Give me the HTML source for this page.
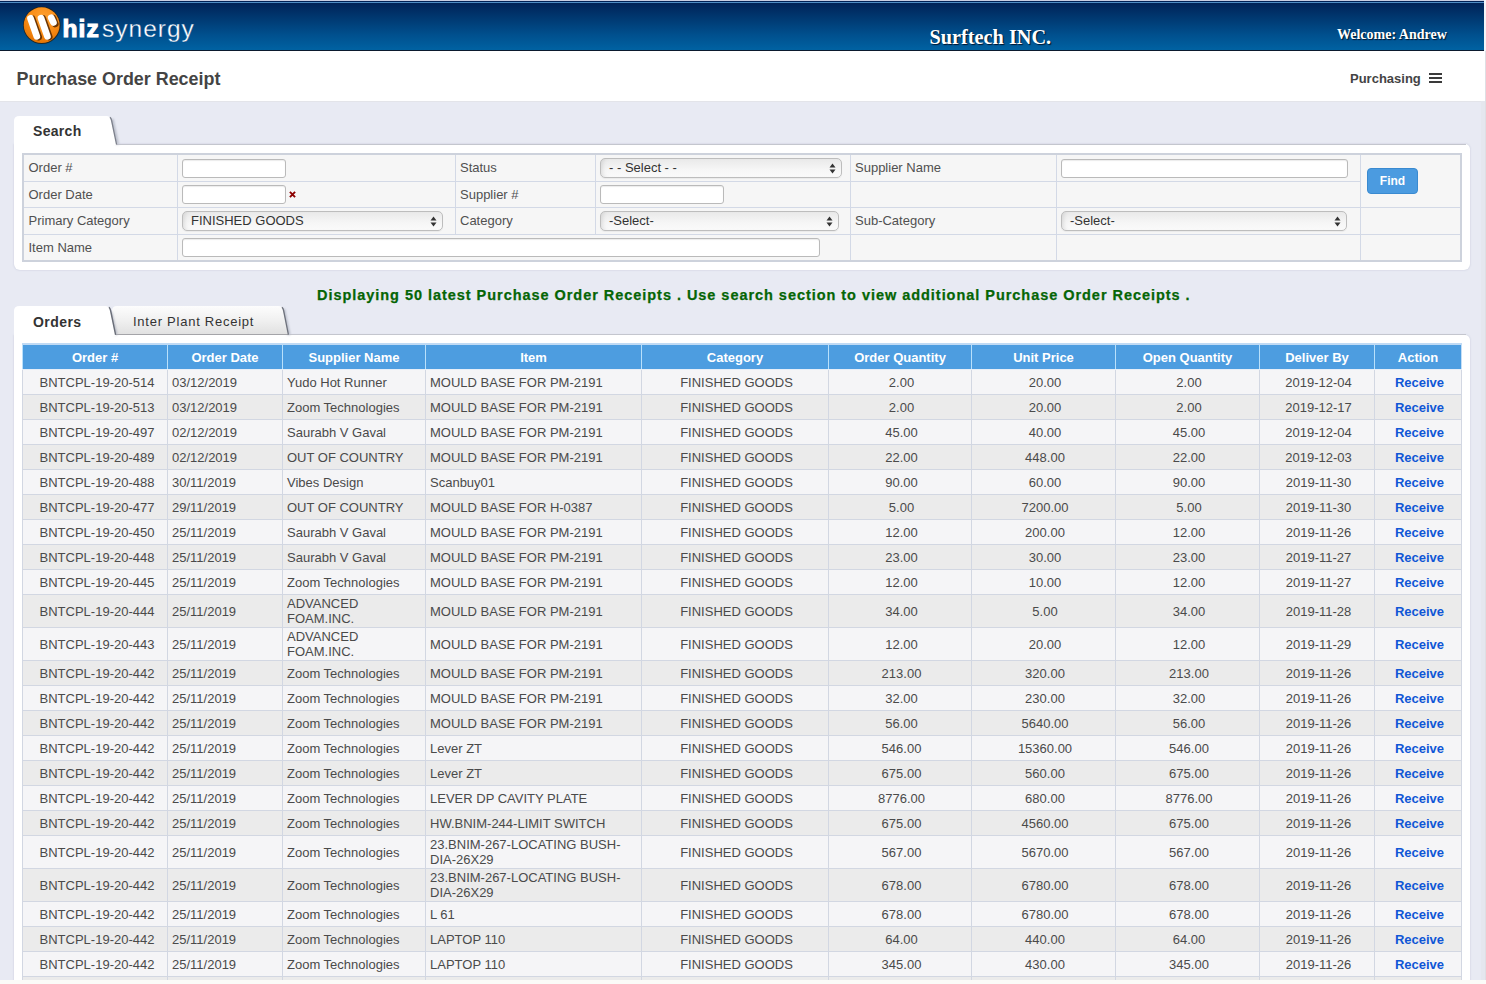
<!DOCTYPE html>
<html><head><meta charset="utf-8">
<style>
*{box-sizing:border-box;margin:0;padding:0}
html,body{width:1486px;height:984px;overflow:hidden}
body{background:#e8eaf3;font-family:"Liberation Sans",sans-serif;color:#4a4a4a;position:relative}
.abs{position:absolute}
#hdr{position:absolute;left:0;top:0;width:1484px;height:51px;background:linear-gradient(#001f55 0px,#00376f 16px,#00508e 34px,#0062a2 49px);border-top:1px solid #1b2740;border-bottom:1px solid #0b1a2e}
#hdrtop{position:absolute;left:0;top:0;width:1486px;height:1px;background:#c9cde2}
#hdrline{position:absolute;left:0;top:2px;width:1484px;height:1px;background:#4f8cc4}
#rstrip{position:absolute;left:1484px;top:0;width:2px;height:51px;background:#f4f4f8}
.sf{font-family:"Liberation Serif",serif;font-weight:bold;color:#fff;text-shadow:1px 1px 1px #00152e;white-space:nowrap}
#titlebar{position:absolute;left:0;top:51px;width:1486px;height:50px;background:#fff}
.panel{position:absolute;background:#fff;border-radius:6px;box-shadow:0 0 2px rgba(120,130,160,.35)}
.tabbar{position:absolute;left:0;top:0;right:0;background:#e8eaf3}
table.s{position:absolute;border-collapse:collapse;table-layout:fixed;background:#f6f6f6}
table.s td{border:1px solid #d3d9e6;font-size:13px;color:#505050;padding:0 0 0 4.5px;vertical-align:middle;white-space:nowrap}
.inp{position:absolute;background:#fff;border:1px solid #bababa;border-radius:3px;box-shadow:inset 0 1px 1px rgba(0,0,0,.08)}
.sel{position:absolute;background:linear-gradient(#e9e9e9,#f6f6f6 60%,#fafafa);border:1px solid #bdbdbd;border-radius:5px;font-size:13px;color:#333;line-height:17px;padding-left:8px;white-space:nowrap;box-shadow:inset 5px 0 5px -4px rgba(0,0,0,.13),0 1px 1px rgba(0,0,0,.05)}
.ar{position:absolute;right:5px;top:4px}
.lbl{position:absolute;font-size:13px;color:#4a4a4a;white-space:nowrap}
table.g{position:absolute;left:22px;top:343px;border-collapse:collapse;table-layout:fixed;width:1440px}
table.g th{background:#4d9de0;color:#fff;font-size:13px;font-weight:bold;height:25px;padding-top:1px !important;border-left:1px solid #b9e0fb;border-top:2px solid #c0daf4;border-bottom:1px solid #e6eef8;padding:0;text-align:center;white-space:nowrap}
table.g td{font-size:13px;color:#4a4a4a;height:25px;border:1px solid #d2d7e2;padding:1px 4px 0 4px;line-height:15px;white-space:nowrap;vertical-align:middle}
table.g th:last-child{border-right:1px solid #c4def6}
table.g td.c{text-align:center;padding-left:5.5px;padding-right:2.5px}
table.g td.c0{text-align:center;padding-left:9px;padding-right:5px}
table.g tr.o td{background:#f5f5f7}
table.g tr.e td{background:#ebebeb}
table.g tr.t td{height:33px}
table.g a{color:#0f56d6;font-weight:bold}
</style></head><body>
<div id="hdr"></div>
<div id="hdrtop"></div>
<div id="hdrline"></div>
<div id="rstrip"></div>
<svg class="abs" style="left:0;top:0" width="70" height="50" viewBox="0 0 70 50">
 <defs>
  <radialGradient id="og" cx="0.55" cy="0.3" r="0.75">
   <stop offset="0" stop-color="#ffa030"/><stop offset="0.6" stop-color="#f78a14"/><stop offset="1" stop-color="#e27000"/>
  </radialGradient>
 </defs>
 <circle cx="41.8" cy="25.4" r="18.7" fill="#2a1a05" opacity="0.75"/>
 <circle cx="41.7" cy="25.2" r="17.9" fill="url(#og)"/>
 <g stroke="#5e2c00" stroke-width="6.8" stroke-linecap="round" opacity="0.9">
  <line x1="32.2" y1="18.8" x2="38.6" y2="37"/>
  <line x1="42.8" y1="18.6" x2="49.2" y2="36.9"/>
  <line x1="53" y1="18.2" x2="55.2" y2="23.9"/>
 </g>
 <g stroke="#fff" stroke-width="6.7" stroke-linecap="round">
  <line x1="30.5" y1="18.3" x2="36.8" y2="36.4"/>
  <line x1="41" y1="18.1" x2="47.4" y2="36.4"/>
  <line x1="51.2" y1="17.8" x2="53.4" y2="22.4"/>
 </g>
</svg>
<div class="abs" style="left:62.5px;top:14px;font-size:24.5px;font-weight:bold;color:#fff;letter-spacing:1.1px;-webkit-text-stroke:1.1px #fff;line-height:30px">hiz</div>
<div class="abs" style="left:102px;top:14px;font-size:24.5px;color:#fff;letter-spacing:1px;line-height:30px;-webkit-text-stroke:0.3px #004586">synergy</div>
<div class="abs sf" style="left:929.5px;top:26px;font-size:20.3px;line-height:22px">Surftech INC.</div>
<div class="abs sf" style="left:1337px;top:27px;font-size:14px;line-height:16px">Welcome: Andrew</div>

<div id="titlebar"></div>
<div class="abs" style="left:0;top:101px;width:1486px;height:1px;background:#e3e4e9"></div>
<div class="abs" style="left:1481px;top:101px;width:5px;height:879px;background:#e5e7ee"></div>
<div class="abs" style="left:1485px;top:51px;width:1px;height:929px;background:#dedfe4"></div>
<div class="abs" style="left:16.5px;top:69px;font-size:17.9px;font-weight:bold;color:#444;line-height:20px">Purchase Order Receipt</div>
<div class="abs" style="left:1350px;top:71px;font-size:13px;font-weight:bold;color:#444;line-height:15px">Purchasing</div>
<div class="abs" style="left:1429px;top:73px;width:13px;height:2px;background:#3a3a3a"></div>
<div class="abs" style="left:1429px;top:77px;width:13px;height:2px;background:#3a3a3a"></div>
<div class="abs" style="left:1429px;top:81px;width:13px;height:2px;background:#3a3a3a"></div>

<!-- SEARCH PANEL -->
<div class="panel" style="left:14px;top:144px;width:1456px;height:126px;border-radius:0 5px 6px 6px"></div>
<div class="abs" style="left:112px;top:143.5px;width:1354px;height:1px;background:#c4c6ce"></div>
<svg class="abs" style="left:0;top:100px" width="140" height="50" viewBox="0 100 140 50">
 <defs><filter id="bl1" x="-50%" y="-10%" width="200%" height="120%"><feGaussianBlur stdDeviation="0.9"/></filter></defs>
 <path d="M112 119 L117.5 144.5" stroke="#b8bcc8" stroke-width="3" fill="none" filter="url(#bl1)"/>
 <path d="M14 145 L14 121 Q14 116 19.5 116 L106.5 116 Q110 116 111 119.5 L116.8 145 Z" fill="#fff"/>
 <path d="M110 117.2 Q111.2 118.5 111.6 120.5 L116.6 144.6" stroke="#7d818c" stroke-width="1.3" fill="none"/>
</svg>
<div class="abs" style="left:33px;top:123px;font-size:14px;font-weight:bold;color:#333;letter-spacing:0.3px;line-height:16px">Search</div>

<table class="s" style="left:22px;top:153px;width:1437px;height:107px;border:2px solid #cdd2dc">
<colgroup><col style="width:154px"><col style="width:278px"><col style="width:140px"><col style="width:255px"><col style="width:206px"><col style="width:304px"><col style="width:101px"></colgroup>
<tr style="height:27px"><td>Order #</td><td></td><td>Status</td><td></td><td>Supplier Name</td><td></td><td rowspan="2"></td></tr>
<tr style="height:26px"><td>Order Date</td><td></td><td>Supplier #</td><td></td><td></td><td></td></tr>
<tr style="height:27px"><td>Primary Category</td><td></td><td>Category</td><td></td><td>Sub-Category</td><td></td><td></td></tr>
<tr style="height:27px"><td>Item Name</td><td colspan="3"></td><td></td><td></td><td></td></tr>
</table>
<div class="inp" style="left:182px;top:159px;width:104px;height:19px"></div>
<div class="inp" style="left:182px;top:185px;width:104px;height:19px"></div>
<svg class="abs" style="left:289px;top:191px" width="7" height="7" viewBox="0 0 7 7"><path d="M0.9 0.9 L6.1 6.1 M6.1 0.9 L0.9 6.1" stroke="#8c0000" stroke-width="1.9"/></svg>
<div class="sel" style="left:182px;top:211px;width:261px;height:20px">FINISHED GOODS<svg class="ar" width="7" height="11" viewBox="0 0 7 11"><path d="M3.5 0.5 L6.5 4.5 L0.5 4.5 Z M0.5 6.5 L6.5 6.5 L3.5 10.5 Z" fill="#333"/></svg></div>
<div class="inp" style="left:182px;top:238px;width:638px;height:19px"></div>
<div class="sel" style="left:600px;top:158px;width:242px;height:20px">- - Select - -<svg class="ar" width="7" height="11" viewBox="0 0 7 11"><path d="M3.5 0.5 L6.5 4.5 L0.5 4.5 Z M0.5 6.5 L6.5 6.5 L3.5 10.5 Z" fill="#333"/></svg></div>
<div class="inp" style="left:600px;top:185px;width:124px;height:19px"></div>
<div class="sel" style="left:600px;top:211px;width:239px;height:20px">-Select-<svg class="ar" width="7" height="11" viewBox="0 0 7 11"><path d="M3.5 0.5 L6.5 4.5 L0.5 4.5 Z M0.5 6.5 L6.5 6.5 L3.5 10.5 Z" fill="#333"/></svg></div>
<div class="inp" style="left:1061px;top:159px;width:287px;height:19px"></div>
<div class="sel" style="left:1061px;top:211px;width:286px;height:20px">-Select-<svg class="ar" width="7" height="11" viewBox="0 0 7 11"><path d="M3.5 0.5 L6.5 4.5 L0.5 4.5 Z M0.5 6.5 L6.5 6.5 L3.5 10.5 Z" fill="#333"/></svg></div>
<div class="abs" style="left:1367px;top:168px;width:51px;height:26px;background:#4b9be0;border:1px solid #3a8ad0;border-radius:4px;color:#fff;font-size:12px;font-weight:bold;text-align:center;line-height:24px">Find</div>

<!-- ORDERS PANEL -->
<div class="panel" style="left:14px;top:335px;width:1456px;height:700px;border-radius:0 5px 6px 6px"></div>
<div class="abs" style="left:285px;top:334px;width:1181px;height:1px;background:#c4c6ce"></div>
<svg class="abs" style="left:0;top:295px" width="310" height="45" viewBox="0 295 310 45">
 <defs>
  <linearGradient id="tg" x1="0" y1="0" x2="0" y2="1"><stop offset="0" stop-color="#fdfdfd"/><stop offset="0.5" stop-color="#f0f0f0"/><stop offset="1" stop-color="#e0e0e0"/></linearGradient>
  <filter id="bl2" x="-50%" y="-10%" width="200%" height="120%"><feGaussianBlur stdDeviation="0.9"/></filter>
 </defs>
 <path d="M283.5 309 L289 335" stroke="#b8bcc8" stroke-width="3" fill="none" filter="url(#bl2)"/>
 <path d="M112 335 L112 311 Q112 306 117 306 L278.5 306 Q282 306 283 309.5 L288.6 335 Z" fill="url(#tg)"/>
 <path d="M112 334.5 L288.6 334.5" stroke="#a4a4a8" stroke-width="1"/>
 <path d="M282 307.2 Q283.2 308.5 283.6 310.5 L288.4 334.6" stroke="#6e727c" stroke-width="1.3" fill="none"/>
 <path d="M111 109" stroke="none"/>
 <path d="M110.5 312 L116 335" stroke="#b0b4c0" stroke-width="3" fill="none" filter="url(#bl2)"/>
 <path d="M14 336 L14 311 Q14 306 19.5 306 L105.5 306 Q109 306 110 309.5 L115.8 336 Z" fill="#fff"/>
 <path d="M109 307.2 Q110.2 308.5 110.6 310.5 L115.6 334.8" stroke="#6a6e78" stroke-width="1.4" fill="none"/>
</svg>
<div class="abs" style="left:33px;top:313.5px;font-size:14px;font-weight:bold;color:#333;letter-spacing:0.45px;line-height:16px">Orders</div>
<div class="abs" style="left:133px;top:314px;font-size:13px;color:#333;letter-spacing:0.75px;line-height:16px">Inter Plant Receipt</div>

<div class="abs" style="left:317px;top:287px;font-size:14.5px;font-weight:bold;color:#056505;letter-spacing:0.96px;line-height:16px;white-space:nowrap;-webkit-text-stroke:0.25px #056505">Displaying 50 latest Purchase Order Receipts . Use search section to view additional Purchase Order Receipts .</div>

<table class="g">
<colgroup><col style="width:145px"><col style="width:115px"><col style="width:143px"><col style="width:216px"><col style="width:187px"><col style="width:143px"><col style="width:144px"><col style="width:144px"><col style="width:115px"><col style="width:87px"></colgroup>
<tr><th>Order #</th><th>Order Date</th><th>Supplier Name</th><th>Item</th><th>Category</th><th>Order Quantity</th><th>Unit Price</th><th>Open Quantity</th><th>Deliver By</th><th>Action</th></tr>
<tr class="o"><td class="c0">BNTCPL-19-20-514</td><td>03/12/2019</td><td>Yudo Hot Runner</td><td>MOULD BASE FOR PM-2191</td><td class="c">FINISHED GOODS</td><td class="c">2.00</td><td class="c">20.00</td><td class="c">2.00</td><td class="c">2019-12-04</td><td class="c"><a>Receive</a></td></tr>
<tr class="e"><td class="c0">BNTCPL-19-20-513</td><td>03/12/2019</td><td>Zoom Technologies</td><td>MOULD BASE FOR PM-2191</td><td class="c">FINISHED GOODS</td><td class="c">2.00</td><td class="c">20.00</td><td class="c">2.00</td><td class="c">2019-12-17</td><td class="c"><a>Receive</a></td></tr>
<tr class="o"><td class="c0">BNTCPL-19-20-497</td><td>02/12/2019</td><td>Saurabh V Gaval</td><td>MOULD BASE FOR PM-2191</td><td class="c">FINISHED GOODS</td><td class="c">45.00</td><td class="c">40.00</td><td class="c">45.00</td><td class="c">2019-12-04</td><td class="c"><a>Receive</a></td></tr>
<tr class="e"><td class="c0">BNTCPL-19-20-489</td><td>02/12/2019</td><td>OUT OF COUNTRY</td><td>MOULD BASE FOR PM-2191</td><td class="c">FINISHED GOODS</td><td class="c">22.00</td><td class="c">448.00</td><td class="c">22.00</td><td class="c">2019-12-03</td><td class="c"><a>Receive</a></td></tr>
<tr class="o"><td class="c0">BNTCPL-19-20-488</td><td>30/11/2019</td><td>Vibes Design</td><td>Scanbuy01</td><td class="c">FINISHED GOODS</td><td class="c">90.00</td><td class="c">60.00</td><td class="c">90.00</td><td class="c">2019-11-30</td><td class="c"><a>Receive</a></td></tr>
<tr class="e"><td class="c0">BNTCPL-19-20-477</td><td>29/11/2019</td><td>OUT OF COUNTRY</td><td>MOULD BASE FOR H-0387</td><td class="c">FINISHED GOODS</td><td class="c">5.00</td><td class="c">7200.00</td><td class="c">5.00</td><td class="c">2019-11-30</td><td class="c"><a>Receive</a></td></tr>
<tr class="o"><td class="c0">BNTCPL-19-20-450</td><td>25/11/2019</td><td>Saurabh V Gaval</td><td>MOULD BASE FOR PM-2191</td><td class="c">FINISHED GOODS</td><td class="c">12.00</td><td class="c">200.00</td><td class="c">12.00</td><td class="c">2019-11-26</td><td class="c"><a>Receive</a></td></tr>
<tr class="e"><td class="c0">BNTCPL-19-20-448</td><td>25/11/2019</td><td>Saurabh V Gaval</td><td>MOULD BASE FOR PM-2191</td><td class="c">FINISHED GOODS</td><td class="c">23.00</td><td class="c">30.00</td><td class="c">23.00</td><td class="c">2019-11-27</td><td class="c"><a>Receive</a></td></tr>
<tr class="o"><td class="c0">BNTCPL-19-20-445</td><td>25/11/2019</td><td>Zoom Technologies</td><td>MOULD BASE FOR PM-2191</td><td class="c">FINISHED GOODS</td><td class="c">12.00</td><td class="c">10.00</td><td class="c">12.00</td><td class="c">2019-11-27</td><td class="c"><a>Receive</a></td></tr>
<tr class="e t"><td class="c0">BNTCPL-19-20-444</td><td>25/11/2019</td><td>ADVANCED<br>FOAM.INC.</td><td>MOULD BASE FOR PM-2191</td><td class="c">FINISHED GOODS</td><td class="c">34.00</td><td class="c">5.00</td><td class="c">34.00</td><td class="c">2019-11-28</td><td class="c"><a>Receive</a></td></tr>
<tr class="o t"><td class="c0">BNTCPL-19-20-443</td><td>25/11/2019</td><td>ADVANCED<br>FOAM.INC.</td><td>MOULD BASE FOR PM-2191</td><td class="c">FINISHED GOODS</td><td class="c">12.00</td><td class="c">20.00</td><td class="c">12.00</td><td class="c">2019-11-29</td><td class="c"><a>Receive</a></td></tr>
<tr class="e"><td class="c0">BNTCPL-19-20-442</td><td>25/11/2019</td><td>Zoom Technologies</td><td>MOULD BASE FOR PM-2191</td><td class="c">FINISHED GOODS</td><td class="c">213.00</td><td class="c">320.00</td><td class="c">213.00</td><td class="c">2019-11-26</td><td class="c"><a>Receive</a></td></tr>
<tr class="o"><td class="c0">BNTCPL-19-20-442</td><td>25/11/2019</td><td>Zoom Technologies</td><td>MOULD BASE FOR PM-2191</td><td class="c">FINISHED GOODS</td><td class="c">32.00</td><td class="c">230.00</td><td class="c">32.00</td><td class="c">2019-11-26</td><td class="c"><a>Receive</a></td></tr>
<tr class="e"><td class="c0">BNTCPL-19-20-442</td><td>25/11/2019</td><td>Zoom Technologies</td><td>MOULD BASE FOR PM-2191</td><td class="c">FINISHED GOODS</td><td class="c">56.00</td><td class="c">5640.00</td><td class="c">56.00</td><td class="c">2019-11-26</td><td class="c"><a>Receive</a></td></tr>
<tr class="o"><td class="c0">BNTCPL-19-20-442</td><td>25/11/2019</td><td>Zoom Technologies</td><td>Lever ZT</td><td class="c">FINISHED GOODS</td><td class="c">546.00</td><td class="c">15360.00</td><td class="c">546.00</td><td class="c">2019-11-26</td><td class="c"><a>Receive</a></td></tr>
<tr class="e"><td class="c0">BNTCPL-19-20-442</td><td>25/11/2019</td><td>Zoom Technologies</td><td>Lever ZT</td><td class="c">FINISHED GOODS</td><td class="c">675.00</td><td class="c">560.00</td><td class="c">675.00</td><td class="c">2019-11-26</td><td class="c"><a>Receive</a></td></tr>
<tr class="o"><td class="c0">BNTCPL-19-20-442</td><td>25/11/2019</td><td>Zoom Technologies</td><td>LEVER DP CAVITY PLATE</td><td class="c">FINISHED GOODS</td><td class="c">8776.00</td><td class="c">680.00</td><td class="c">8776.00</td><td class="c">2019-11-26</td><td class="c"><a>Receive</a></td></tr>
<tr class="e"><td class="c0">BNTCPL-19-20-442</td><td>25/11/2019</td><td>Zoom Technologies</td><td>HW.BNIM-244-LIMIT SWITCH</td><td class="c">FINISHED GOODS</td><td class="c">675.00</td><td class="c">4560.00</td><td class="c">675.00</td><td class="c">2019-11-26</td><td class="c"><a>Receive</a></td></tr>
<tr class="o t"><td class="c0">BNTCPL-19-20-442</td><td>25/11/2019</td><td>Zoom Technologies</td><td>23.BNIM-267-LOCATING BUSH-<br>DIA-26X29</td><td class="c">FINISHED GOODS</td><td class="c">567.00</td><td class="c">5670.00</td><td class="c">567.00</td><td class="c">2019-11-26</td><td class="c"><a>Receive</a></td></tr>
<tr class="e t"><td class="c0">BNTCPL-19-20-442</td><td>25/11/2019</td><td>Zoom Technologies</td><td>23.BNIM-267-LOCATING BUSH-<br>DIA-26X29</td><td class="c">FINISHED GOODS</td><td class="c">678.00</td><td class="c">6780.00</td><td class="c">678.00</td><td class="c">2019-11-26</td><td class="c"><a>Receive</a></td></tr>
<tr class="o"><td class="c0">BNTCPL-19-20-442</td><td>25/11/2019</td><td>Zoom Technologies</td><td>L 61</td><td class="c">FINISHED GOODS</td><td class="c">678.00</td><td class="c">6780.00</td><td class="c">678.00</td><td class="c">2019-11-26</td><td class="c"><a>Receive</a></td></tr>
<tr class="e"><td class="c0">BNTCPL-19-20-442</td><td>25/11/2019</td><td>Zoom Technologies</td><td>LAPTOP 110</td><td class="c">FINISHED GOODS</td><td class="c">64.00</td><td class="c">440.00</td><td class="c">64.00</td><td class="c">2019-11-26</td><td class="c"><a>Receive</a></td></tr>
<tr class="o"><td class="c0">BNTCPL-19-20-442</td><td>25/11/2019</td><td>Zoom Technologies</td><td>LAPTOP 110</td><td class="c">FINISHED GOODS</td><td class="c">345.00</td><td class="c">430.00</td><td class="c">345.00</td><td class="c">2019-11-26</td><td class="c"><a>Receive</a></td></tr>
<tr class="e"><td class="c0">BNTCPL-19-20-442</td><td>25/11/2019</td><td>Zoom Technologies</td><td>LAPTOP 110</td><td class="c">FINISHED GOODS</td><td class="c">345.00</td><td class="c">430.00</td><td class="c">345.00</td><td class="c">2019-11-26</td><td class="c"><a>Receive</a></td></tr>
</table>
<div class="abs" style="left:0;top:980px;width:1486px;height:4px;background:#fbfbf8"></div>
</body></html>
